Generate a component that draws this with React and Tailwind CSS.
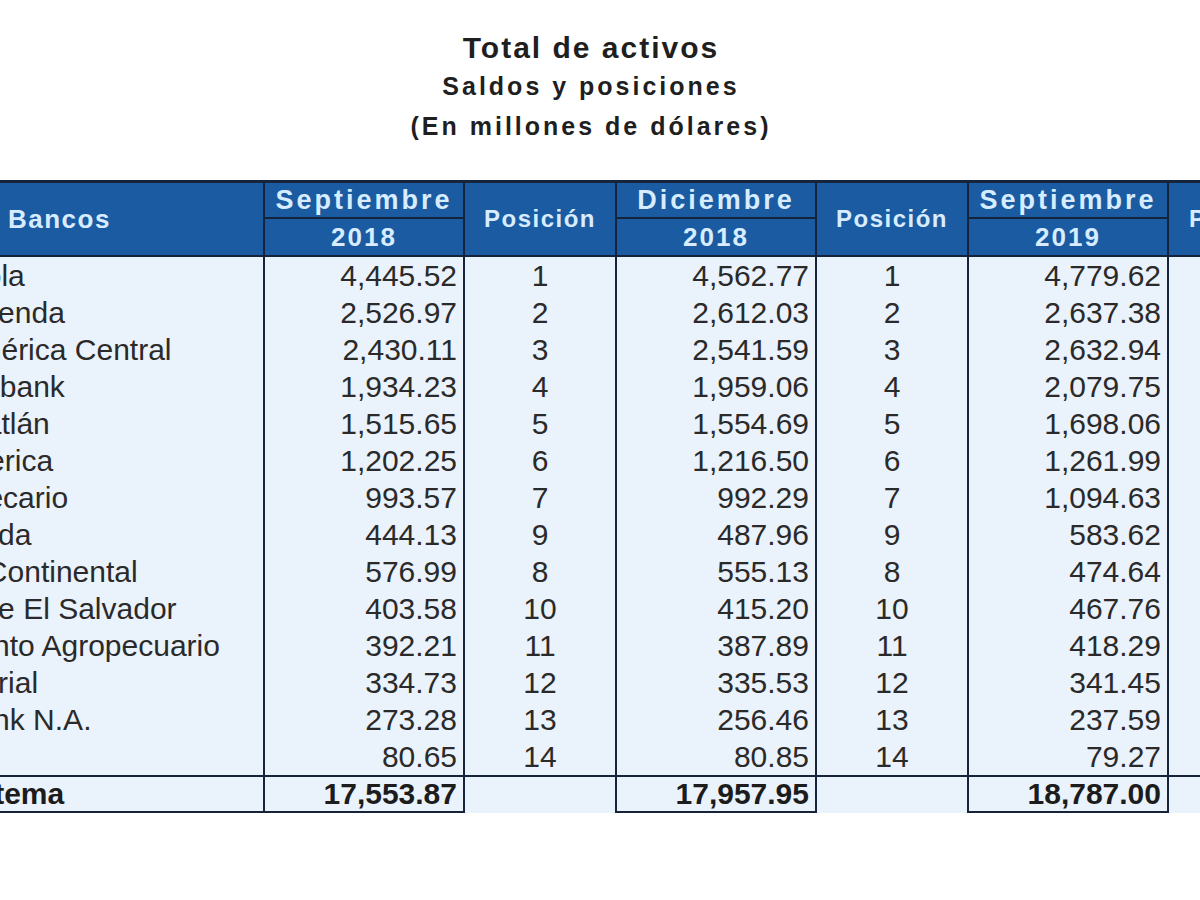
import React from 'react';

const rows = [
  ['Banco Agrícola', '4,445.52', '1', '4,562.77', '1', '4,779.62'],
  ['Banco Davivienda', '2,526.97', '2', '2,612.03', '2', '2,637.38'],
  ['Banco de América Central', '2,430.11', '3', '2,541.59', '3', '2,632.94'],
  ['Banco Scotiabank', '1,934.23', '4', '1,959.06', '4', '2,079.75'],
  ['Banco Cuscatlán', '1,515.65', '5', '1,554.69', '5', '1,698.06'],
  ['Banco Promerica', '1,202.25', '6', '1,216.50', '6', '1,261.99'],
  ['Banco Hipotecario', '993.57', '7', '992.29', '7', '1,094.63'],
  ['Banco Atlántida', '444.13', '9', '487.96', '9', '583.62'],
  ['Banco G&T Continental', '576.99', '8', '555.13', '8', '474.64'],
  ['Banco Azul de El Salvador', '403.58', '10', '415.20', '10', '467.76'],
  ['Banco Fomento Agropecuario', '392.21', '11', '387.89', '11', '418.29'],
  ['Banco Industrial', '334.73', '12', '335.53', '12', '341.45'],
  ['Banco Citibank N.A.', '273.28', '13', '256.46', '13', '237.59'],
  ['ABANK', '80.65', '14', '80.85', '14', '79.27'],
];

const cols = 'grid grid-cols-[447px_200px_152px_200px_152px_200px_152px]';
const line = 'border-[#15243a]';

function App() {
  return (
    <div className="w-full h-[900px] overflow-hidden bg-white" style={{ fontFamily: '"Liberation Sans", Arial, sans-serif' }}>
      <div className="pt-[30px] pr-[18px] text-center font-bold text-[#1f1f1f]">
        <p className="h-[36px] leading-[36px] text-[30px] tracking-[2px]">Total de activos</p>
        <p className="h-[40px] leading-[40px] text-[25px] tracking-[3px]">Saldos y posiciones</p>
        <p className="h-[40px] leading-[40px] text-[25px] tracking-[3px]">(En millones de dólares)</p>
      </div>

      <div className="mt-[34px] ml-[-182px] w-[1503px]">
        {/* header */}
        <div className={`${cols} grid-rows-[36px_36px] bg-[#1a5ba2] border-t-[3px] border-b-2 ${line} font-bold text-[#d8ecff]`}>
          <div className={`row-span-2 border-r-2 ${line} flex items-center pl-[190px] text-[26px] tracking-[1.5px]`}>Bancos</div>
          <div className={`border-r-2 border-b-2 ${line} flex items-center justify-center text-[27px] tracking-[3px]`}>Septiembre</div>
          <div className={`row-span-2 border-r-2 ${line} flex items-center justify-center text-[24px] tracking-[1.5px]`}>Posición</div>
          <div className={`border-r-2 border-b-2 ${line} flex items-center justify-center text-[27px] tracking-[3px]`}>Diciembre</div>
          <div className={`row-span-2 border-r-2 ${line} flex items-center justify-center text-[24px] tracking-[1.5px]`}>Posición</div>
          <div className={`border-r-2 border-b-2 ${line} flex items-center justify-center text-[27px] tracking-[3px]`}>Septiembre</div>
          <div className="row-span-2 flex items-center justify-center text-[24px] tracking-[1.5px]">Posición</div>
          <div className={`col-start-2 border-r-2 ${line} flex items-center justify-center text-[26px] tracking-[2px]`}>2018</div>
          <div className={`col-start-4 border-r-2 ${line} flex items-center justify-center text-[26px] tracking-[2px]`}>2018</div>
          <div className={`col-start-6 border-r-2 ${line} flex items-center justify-center text-[26px] tracking-[2px]`}>2019</div>
        </div>

        {/* body */}
        <div className="bg-[#eaf2fb] text-[30px] leading-[37px] text-[#2a2a2a]">
          {rows.map((r) => (
            <div key={r[0]} className={`${cols} h-[37px]`}>
              <div className={`border-r-2 ${line} pl-[5px] whitespace-nowrap overflow-hidden`}>{r[0]}</div>
              <div className={`border-r-2 ${line} pr-[6px] text-right`}>{r[1]}</div>
              <div className={`border-r-2 ${line} text-center`}>{r[2]}</div>
              <div className={`border-r-2 ${line} pr-[6px] text-right`}>{r[3]}</div>
              <div className={`border-r-2 ${line} text-center`}>{r[4]}</div>
              <div className={`border-r-2 ${line} pr-[6px] text-right`}>{r[5]}</div>
              <div />
            </div>
          ))}

          <div className={`${cols} border-t-2 ${line} font-bold text-[#1c1c1c]`}>
            <div className={`h-[36px] border-r-2 border-b-2 ${line} pl-[5px] leading-[34px] whitespace-nowrap`}>Total del sistema</div>
            <div className={`h-[36px] border-r-2 border-b-2 ${line} pr-[6px] leading-[34px] text-right`}>17,553.87</div>
            <div className={`h-[36px] border-r-2 ${line}`} />
            <div className={`h-[36px] border-r-2 border-b-2 ${line} pr-[6px] leading-[34px] text-right`}>17,957.95</div>
            <div className={`h-[36px] border-r-2 ${line}`} />
            <div className={`h-[36px] border-r-2 border-b-2 ${line} pr-[6px] leading-[34px] text-right`}>18,787.00</div>
            <div className="h-[36px]" />
          </div>
        </div>
      </div>
    </div>
  );
}

export default App;
